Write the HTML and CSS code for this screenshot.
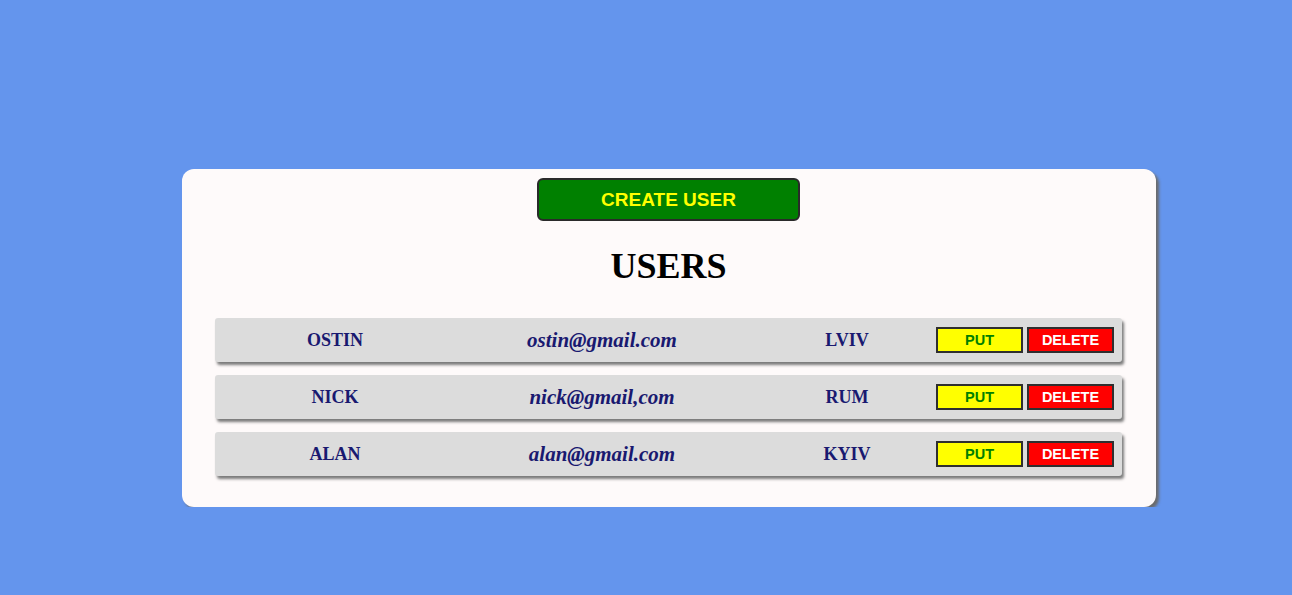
FILE: index.html
```html
<!DOCTYPE html>
<html>
<head>
<meta charset="utf-8">
<link rel="stylesheet" href="styles.css">
</head>
<body>
<div class="page">
  <div class="card">
    <button class="create">CREATE USER</button>
    <h1 class="title">USERS</h1>
    <div class="list">
      <div class="row">
        <div class="name">OSTIN</div>
        <div class="email">ostin@gmail.com</div>
        <div class="city">LVIV</div>
        <div class="actions"><button class="btn put">PUT</button><button class="btn del">DELETE</button></div>
      </div>
      <div class="row">
        <div class="name">NICK</div>
        <div class="email">nick@gmail,com</div>
        <div class="city">RUM</div>
        <div class="actions"><button class="btn put">PUT</button><button class="btn del">DELETE</button></div>
      </div>
      <div class="row">
        <div class="name">ALAN</div>
        <div class="email">alan@gmail.com</div>
        <div class="city">KYIV</div>
        <div class="actions"><button class="btn put">PUT</button><button class="btn del">DELETE</button></div>
      </div>
    </div>
  </div>
</div>
</body>
</html>
```

FILE: styles.css
```css
html, body {
  margin: 0;
  padding: 0;
  background: #6495ed;
  font-family: "Liberation Serif", "Times New Roman", serif;
}
.page {
  padding: 169px 0 0 182px;
}
.card {
  box-sizing: border-box;
  width: 974px;
  height: 338px;
  background: #fefafa;
  border-radius: 12px;
  box-shadow: 3px 3px 3px #6b6b6b;
  padding: 9px 34px 0 33px;
  display: flex;
  flex-direction: column;
  align-items: flex-start;
}
.create {
  box-sizing: border-box;
  width: 263px;
  height: 43px;
  background: #008000;
  color: #ffff00;
  border: 2px solid #2a2a2a;
  border-radius: 6px;
  font-family: "Liberation Sans", Arial, sans-serif;
  font-weight: bold;
  font-size: 19px;
  padding: 0;
  margin-left: 322px;
}
.title {
  align-self: stretch;
  text-align: center;
  margin: 25px 0 0 0;
  font-size: 36px;
  line-height: 40px;
  font-weight: bold;
  color: #000;
}
.list {
  margin-top: 32px;
  width: 907px;
  display: flex;
  flex-direction: column;
  gap: 13px;
}
.row {
  height: 44px;
  background: #dcdcdc;
  border-radius: 3px;
  box-shadow: 2px 3px 3px #7a7a7a;
  display: flex;
  align-items: center;
  color: #191970;
  font-weight: bold;
}
.name {
  width: 240px;
  text-align: center;
  font-size: 18px;
}
.email {
  width: 294px;
  text-align: center;
  font-size: 21px;
  font-style: italic;
}
.city {
  width: 176px;
  margin-left: 10px;
  text-align: center;
  font-size: 18px;
}
.actions {
  margin-left: 1px;
  display: flex;
  gap: 4px;
}
.btn {
  box-sizing: border-box;
  width: 87px;
  height: 26px;
  border: 2px solid #2f2f2f;
  padding: 0;
  font-family: "Liberation Sans", Arial, sans-serif;
  font-weight: bold;
  font-size: 14.5px;
}
.put {
  background: #ffff00;
  color: #008000;
}
.del {
  background: #ff0000;
  color: #ffffff;
}
```
